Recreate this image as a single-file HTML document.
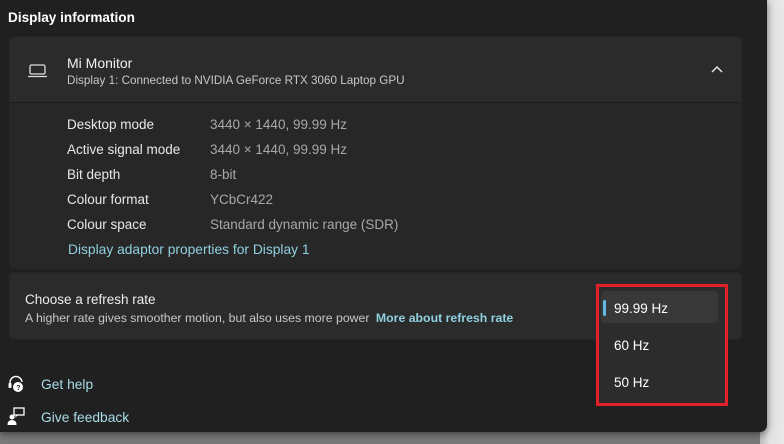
<!DOCTYPE html>
<html><head><style>
*{margin:0;padding:0;box-sizing:border-box}
body{width:784px;height:444px;overflow:hidden;background:linear-gradient(#9a9a9a,#7a7a7a);font-family:"Liberation Sans",sans-serif;position:relative}
.rside{position:absolute;left:760px;top:0;width:24px;height:444px;background:linear-gradient(90deg,#bdbdbd,#e2e2e2 40%,#e8e8e8)}
.win{position:absolute;left:0;top:0;width:767px;height:432px;background:#202020;border-bottom-right-radius:7px;box-shadow:0 2px 8px rgba(0,0,0,.5)}
.t{position:absolute;white-space:nowrap}
.card{position:absolute;left:9px;width:733px;background:#2b2b2b;border-radius:5px;border:1px solid #262626}
.lbl{color:#e8e8e8;font-size:13.5px}
.val{color:#a8a8a8;font-size:13.5px}
</style></head><body>
<div class="rside"></div>
<div class="win">
<div class="t" style="left:8px;top:10px;color:#fff;font-size:13.6px;font-weight:bold">Display information</div>
<div class="card" style="top:36px;height:233px;background:#272727">
  <div style="position:absolute;left:0;top:0;width:731px;height:66px;background:#2b2b2b;border-bottom:1px solid #1c1c1c;border-radius:5px 5px 0 0"></div>
  <svg style="position:absolute;left:17px;top:27px" width="22" height="14" viewBox="0 0 22 14"><rect x="3" y="1" width="15" height="9" rx="1.5" fill="none" stroke="#ddd" stroke-width="1.3"/><line x1="1" y1="12.5" x2="20" y2="12.5" stroke="#ddd" stroke-width="1.3"/></svg>
  <div class="t" style="left:57px;top:18px;color:#f0f0f0;font-size:14px">Mi Monitor</div>
  <div class="t" style="left:57px;top:37px;color:#c8c8c8;font-size:11.7px">Display 1: Connected to NVIDIA GeForce RTX 3060 Laptop GPU</div>
  <svg style="position:absolute;left:700px;top:28px" width="14" height="10" viewBox="0 0 14 10"><path d="M2 7 L7 2 L12 7" fill="none" stroke="#eee" stroke-width="1.4"/></svg>
  <div class="t lbl" style="left:57px;top:80px">Desktop mode</div><div class="t val" style="left:200px;top:80px">3440 × 1440, 99.99 Hz</div>
  <div class="t lbl" style="left:57px;top:105px">Active signal mode</div><div class="t val" style="left:200px;top:105px">3440 × 1440, 99.99 Hz</div>
  <div class="t lbl" style="left:57px;top:130px">Bit depth</div><div class="t val" style="left:200px;top:130px">8-bit</div>
  <div class="t lbl" style="left:57px;top:155px">Colour format</div><div class="t val" style="left:200px;top:155px">YCbCr422</div>
  <div class="t lbl" style="left:57px;top:180px">Colour space</div><div class="t val" style="left:200px;top:180px">Standard dynamic range (SDR)</div>
  <div class="t" style="left:58px;top:205px;color:#8fd0e0;font-size:13.8px">Display adaptor properties for Display 1</div>
</div>
<div class="card" style="top:272px;height:68px">
  <div class="t" style="left:15px;top:19px;color:#eee;font-size:13.5px">Choose a refresh rate</div>
  <div class="t" style="left:15px;top:38px;color:#c8c8c8;font-size:12.3px">A higher rate gives smoother motion, but also uses more power <span style="color:#8fd0e0;font-weight:bold;margin-left:3px;font-size:12.3px">More about refresh rate</span></div>
</div>
<div style="position:absolute;left:596px;top:284px;width:132px;height:122px;border:3.5px solid #e3202a;background:#2c2c2c">
  <div style="position:absolute;left:2px;top:4px;width:117px;height:32px;background:#383838;border-radius:4px"></div>
  <div style="position:absolute;left:4px;top:13px;width:3px;height:16px;background:#63b8e2;border-radius:2px"></div>
  <div class="t" style="left:15px;top:14px;color:#fff;font-size:13.5px">99.99 Hz</div>
  <div class="t" style="left:15px;top:51px;color:#fff;font-size:13.5px">60 Hz</div>
  <div class="t" style="left:15px;top:88px;color:#fff;font-size:13.5px">50 Hz</div>
</div>
<svg style="position:absolute;left:7px;top:375px" width="18" height="18" viewBox="0 0 18 18"><path d="M3 8 A6 6 0 0 1 15 7" fill="none" stroke="#fff" stroke-width="1.4"/><rect x="1.5" y="8" width="3" height="5" rx="1" fill="#fff"/><circle cx="11" cy="12" r="5" fill="#fff"/><text x="9.3" y="15" font-size="7" font-weight="bold" fill="#202020" font-family="Liberation Sans">?</text></svg>
<div class="t" style="left:41px;top:377px;color:#a9dbe8;font-size:13.8px">Get help</div>
<svg style="position:absolute;left:7px;top:407px" width="18" height="18" viewBox="0 0 18 18"><rect x="7" y="1" width="10" height="7" fill="none" stroke="#fff" stroke-width="1.3"/><path d="M9 8 L8 11 L11 8" fill="#fff"/><circle cx="5" cy="10" r="2.5" fill="#fff"/><path d="M0.5 18 Q0.5 13 5 13 Q9.5 13 9.5 18Z" fill="#fff"/></svg>
<div class="t" style="left:41px;top:410px;color:#a9dbe8;font-size:13.8px">Give feedback</div>
</div>
</body></html>
